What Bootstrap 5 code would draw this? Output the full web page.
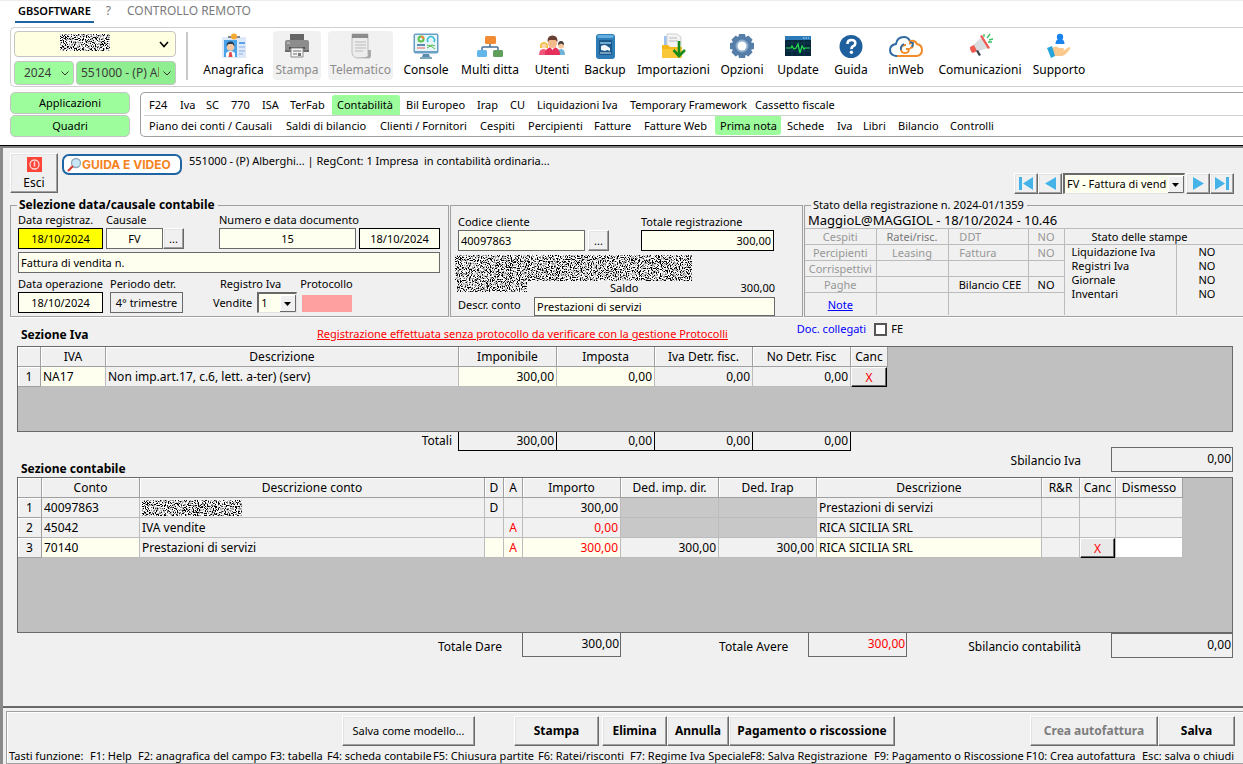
<!DOCTYPE html>
<html lang="it">
<head>
<meta charset="utf-8">
<meta name="viewport" content="width=device-width, initial-scale=1">
<title>GBsoftware - Prima nota</title>
<link href="https://cdn.jsdelivr.net/npm/bootstrap@5.3.0/dist/css/bootstrap.min.css" rel="stylesheet">
<style>
  :root { --face:#f0f0f0; --cream:#fffff0; --edge:#696969; --soft:#a0a0a0; --green:#9dfd9d; }
  body { font-family:"Noto Sans","Open Sans",sans-serif; font-size:11px; line-height:14px; color:#000; background:#fff; border-top:1px solid #ececec; overflow-x:hidden; }
  button, input, select { font-family:inherit; color:inherit; }

  /* top tabs */
  .top-tabs { height:26px; padding-left:15px; font-size:12px; }
  .top-tabs a { color:#7b7b7b; text-decoration:none; line-height:20px; height:22px; }
  .top-tabs a.current { color:#000; font-size:11px; font-weight:600; border-bottom:2px solid #1f64a3; padding:0 3px; }

  /* ribbon */
  .ribbon { margin-left:10px; height:60px; border:1px solid #cfcfcf; border-right:0; border-radius:5px 0 0 5px; padding:3px 0 0 3px; }
  .pickers { display:grid; grid-template-columns:60px 100px; gap:3px 2px; }
  .picker { appearance:none; min-width:0; border:1px solid #c4c4c4; border-radius:4px; height:24px; padding:0 20px 0 9px; font-size:12px; color:#3c3c3c; outline:0;
    background:var(--green) url("data:image/svg+xml,%3Csvg xmlns='http://www.w3.org/2000/svg' width='8' height='5'%3E%3Cpath d='M.5.5 4 4 7.5.5' fill='none' stroke='%23333'/%3E%3C/svg%3E") no-repeat right 4px center; }
  .picker.firm { padding:0 16px 0 4px; background-color:#8fee8f; }
  .picker.who { width:100%; height:26px; background-color:#ffffe1; background-image:url("data:image/svg+xml,%3Csvg xmlns='http://www.w3.org/2000/svg' width='10' height='7'%3E%3Cpath d='M1 1 5 5.500 9 1' fill='none' stroke='%23000' stroke-width='1.600'/%3E%3C/svg%3E"); background-position:right 6px center; }
  .who-wrap { grid-column:1 / 3; position:relative; }
  .who-wrap svg { position:absolute; left:46px; top:3px; }
  .divider { width:2px; height:48px; background:#c9c9c9; margin:1px 0 0 10px; }
  .tools { display:grid; grid-template-columns:67px 60px 67px 64px 64px 60px 46px 91px 46px 66px 40px 70px 78px 80px; margin-left:12px; }
  .tool { border:0; background:none; padding:2px 0 0; height:49px; font-size:12px; line-height:16px; white-space:nowrap; display:flex; flex-direction:column; align-items:center; gap:3px; border-radius:4px; }
  .tool:disabled { background:#f1f1f1; color:#8c8c8c; justify-self:center; width:48px; }
  .tool.wide:disabled { width:65px; }
  .tool svg { height:26px; flex:none; }

  /* menus */
  .menu-bar { margin:5px 0 8px 10px; }
  .side { width:120px; margin-right:10px; display:flex; flex-direction:column; gap:1px; }
  .side button { height:22px; border:1px solid #c4c4c4; border-radius:5px; background:var(--green); padding:0; font-size:11px; }
  .menus { border:1px solid var(--soft); border-right:0; border-radius:5px 0 0 5px; height:45px; padding:2px 0 0 3px; }
  .menu-line { display:grid; height:20px; line-height:19px; }
  .menu-line + .menu-line { border-top:1px solid #cfcfcf; height:21px; }
  .menu-line a { color:#000; text-decoration:none; white-space:nowrap; padding-left:5px; }
  .menu-line a.on { background:var(--green); border-radius:3px 3px 0 0; }
  .menu-line a.on ~ a { padding-left:6px; }
  .menu-line + .menu-line a.on { border-radius:0 0 3px 3px; height:19px; }
  .menu-a { grid-template-columns:31px 26px 25px 31px 28px 47px 68px 71px 33px 27px 93px 125px 1fr; }
  .menu-b { grid-template-columns:137px 94px 100px 48px 66px 50px 76px 66px 50px 26px 35px 52px 1fr; }

  /* work area */
  .work { border-top:1px solid #000; background:var(--face); box-shadow:inset 0 2px 0 #808080, inset 3px 0 0 #8a8a8a; padding:3px 0 0 3px; }
  .sheet { padding:4px 0 0 7px; border-bottom:2px solid var(--edge); }
  .bevel { background:var(--face); border:1px solid; border-color:#fff var(--edge) var(--edge) #fff; box-shadow:inset -1px -1px 0 var(--soft), inset 1px 1px 0 #e3e3e3; padding:0; border-radius:0; }
  .exit { width:48px; height:40px; font-size:12px; line-height:14px; display:flex; flex-direction:column; align-items:center; gap:4px; padding-top:3px; }
  .guide { border:2px solid #1f64a3; border-radius:7px; background:#fff; width:120px; height:21px; margin:1px 0 0 4px; color:#f58220; font:700 12px/17px Inter,"Noto Sans",sans-serif; text-decoration:none; white-space:nowrap; display:flex; align-items:center; padding-left:2px; }
  .guide:hover { color:#f58220; }
  .firm-line { line-height:16px; margin-left:7px; }
  .navigator { margin-right:9px; }
  .navigator button { width:24px; height:21px; display:flex; align-items:center; justify-content:center; }
  .old-select { appearance:none; border:1px solid #e3e3e3; border-top:2px solid var(--edge); border-left:2px solid var(--edge); border-radius:0; height:21px; padding:0 17px 0 2px; font-size:11px; outline:0;
    background:var(--cream) url("data:image/svg+xml,%3Csvg xmlns='http://www.w3.org/2000/svg' width='16' height='17'%3E%3Cpath fill='%23f0f0f0' d='M0 0h16v17H0z'/%3E%3Cpath d='M.5 17V.500H16' fill='none' stroke='%23fff'/%3E%3Cpath d='M0 16.500h15.500V0' fill='none' stroke='%23696969'/%3E%3Cpath d='M4 7h7L7.500 11z'/%3E%3C/svg%3E") no-repeat right 0 center; }
  .navigator .old-select { width:122px; margin:0 1px; }
  .old-select.one { width:40px; }

  /* entry groups */
  .groups { display:grid; grid-template-columns:439fr 353fr 439fr; gap:1px; margin-top:4px; }
  .groups fieldset { border:1px solid var(--soft); box-shadow:0 1px 0 #fff; min-width:0; }
  .groups fieldset.entry { padding:0 8px 2px 7px; }
  .groups fieldset.client { margin-top:7px; padding:8px 27px 0 7px; }
  .groups legend { float:none; width:auto; margin:0 0 0 6px; padding:0 3px 0 2px; font-size:11px; line-height:14px; color:#000; }
  .groups legend.strong { font-size:12px; font-weight:700; margin-left:-1px; }
  .groups label, .cap { display:block; line-height:16px; white-space:nowrap; }
  .gap3 { margin-left:3px; } .gap7 { margin-left:7px; } .gap30 { margin-left:30px; }
  .below { margin-top:3px; }
  .box { display:block; width:100%; height:21px; border:1px solid var(--edge); border-radius:0; background:var(--cream); padding:0 2px; font-size:11px; outline:0; }
  .box.dark { border-color:#000; }
  .box.hot { background:#ff0; }
  .box.flat { background:var(--face); }
  .box.low { height:19px; }
  .w21 { width:21px; height:21px; font-size:11px; line-height:12px; }
  .w57 { width:57px; } .w73 { width:73px; } .w81 { width:81px; } .w85 { width:85px; }
  .w127 { width:127px; } .w133 { width:133px; } .w137 { width:137px; } .w241 { width:241px; }
  .regline { display:flex; align-items:center; gap:5px; }
  .proto { width:50px; height:17px; background:#ffa0a0; margin:3px 0 0 2px; }
  .total { margin-left:32px; }
  .blurred { position:relative; margin:4px 0 5px -3px; }
  .saldo { position:absolute; left:155px; right:0; bottom:-3px; }
  .who-when { font-size:13px; line-height:16px; padding-left:3px; }
  .cells { table-layout:fixed; width:259px; }
  .cells td { border:1px solid #bcbcbc; border-left:0; padding:0; height:16px; line-height:15px; text-align:center; color:#979797; white-space:nowrap; }
  .cells .mid { color:#777; }
  .cells .lit { color:#000; }
  .cells a { color:#00f; }
  .cells tr.last td { height:22px; border-bottom:0; }
  .c71 { width:71px; } .c72 { width:72px; } .c80 { width:80px; } .c36 { width:36px; }
  .prints { border-top:1px solid #bcbcbc; }
  .prints .heading { border-bottom:1px solid #bcbcbc; height:16px; line-height:15px; padding-left:27px; }
  .prints dl { display:grid; grid-template-columns:112px 1fr; }
  .prints dt, .prints dd { margin:0; line-height:14px; height:14px; font-weight:400; }
  .prints dt { padding-left:7px; border-right:1px solid #bcbcbc; }
  .prints dd { padding-left:22px; }
  .prints dt:last-of-type { height:28px; }

  /* grids */
  .notice { height:29px; line-height:16px; padding:0 0 0 11px; }
  .notice .head { margin-top:10px; width:296px; }
  .notice .warn { margin-top:9px; color:#f00; text-decoration:underline; }
  .docs { margin:4px 0 0 auto; padding-right:340px; }
  .docs label { color:#00f; }
  .docs input { appearance:none; width:13px; height:13px; border:2px solid #555; background:#fff; margin:2px 4px 0 8px; }
  .head { font-size:12px; font-weight:700; line-height:16px; margin:0; }
  .well { background:#c0c0c0; border:1px solid var(--edge); margin:0 10px 0 7px; }
  .well.iva { height:86px; }
  .well.conta { height:156px; }
  .sheet-grid { table-layout:fixed; width:1px; border-collapse:separate; border-spacing:0; font-size:12px; }
  .sheet-grid th { background:var(--face); font-weight:400; text-align:center; border-right:1px solid var(--soft); border-bottom:1px solid var(--soft); box-shadow:inset 1px 1px 0 #fff; height:20px; line-height:19px; padding:0; white-space:nowrap; }
  .sheet-grid td { background:#f1f1f1; border-right:1px solid #bcbcbc; border-bottom:1px solid #bcbcbc; height:20px; line-height:19px; padding:0 2px; white-space:nowrap; }
  .sheet-grid td.cream { background:var(--cream); }
  .sheet-grid td.off { background:#c8c8c8; }
  .sheet-grid td.press { padding:0; }
  .k19{width:19px} .k23{width:23px} .k24{width:24px} .k36{width:36px} .k37{width:37px} .k38{width:38px} .k65{width:65px} .k67{width:67px} .k98{width:98px} .k225{width:225px} .k345{width:345px} .k353{width:353px}
  .kill { display:block; width:100%; height:20px; margin-bottom:-1px; background:#e9e9e9; border:1px solid; border-color:#fff #000 #000 #fff; box-shadow:inset -1px -1px 0 var(--edge); color:#f00; font-size:12px; line-height:14px; padding:2px 0 0; }
  .red { color:#f00; }
  .between { height:45px; margin:0 10px 0 7px; }
  .between .head { padding-left:4px; }
  .sums { display:grid; grid-template-columns:442px repeat(4,98px); font-size:12px; line-height:18px; text-align:right; }
  .sums output { border:solid #000; border-width:0 1px 1px 0; padding-right:2px; }
  .sums .lead-in { border-right:1px solid #000; padding-right:6px; height:19px; }
  .sbil { font-size:12px; line-height:28px; margin-top:15px; }
  .balance { border:1px solid var(--edge); height:25px; line-height:22px; text-align:right; padding-right:1px; font-size:12px; width:122px; }
  .balance.narrow { width:99px; border-top:0; height:24px; }
  .end-row { font-size:12px; line-height:28px; margin-right:10px; }
  .pad20 { padding-right:20px; } .pad30 { padding-right:30px; }
  .gap-avere { margin-left:98px; } .gap-sbil { margin-left:61px; }

  /* footer */
  .actions { margin:3px 0 0 3px; border:1px solid var(--soft); border-right:0; box-shadow:inset 1px 1px 0 #fff; padding:4px 8px 0 2px; }
  .actions .bevel { height:30px; font-size:12px; font-weight:700; white-space:nowrap; }
  .actions .bevel:disabled { color:#7d7d7d; }
  .actions .bevel.model { width:133px; font-size:11px; font-weight:400; }
  .b62{width:62px} .b65{width:65px} .b77{width:77px} .b85{width:85px} .b128{width:128px} .b166{width:166px}
  .stampa { margin-left:39px; } .elim { margin-left:3px; } .crea { margin-left:135px; }
  .keys { display:grid; grid-template-columns:81px 48px 132px 57px 106px 105px 92px 120px 124px 152px 116px 1fr; white-space:nowrap; line-height:15px; margin-top:2px; }
</style>
</head>
<body class="d-flex flex-column min-vh-100">

<svg width="0" height="0" class="position-absolute" aria-hidden="true">
  <filter id="speckle" x="0" y="0" width="100%" height="100%">
    <feTurbulence type="fractalNoise" baseFrequency="0.9" numOctaves="2" seed="4"/>
    <feColorMatrix values="1 0 0 0 0  1 0 0 0 0  1 0 0 0 0  0 0 0 0 1"/>
    <feComponentTransfer><feFuncR type="linear" slope="6" intercept="-2.4"/><feFuncG type="linear" slope="6" intercept="-2.4"/><feFuncB type="linear" slope="6" intercept="-2.4"/></feComponentTransfer>
  </filter>
</svg>

<nav class="top-tabs d-flex align-items-start">
  <a href="#" class="current">GBSOFTWARE</a>
  <a href="#" class="ms-2 ps-1">?</a>
  <a href="#" class="ms-3">CONTROLLO REMOTO</a>
</nav>

<header>
  <div class="ribbon d-flex">
    <div class="pickers">
      <div class="who-wrap">
        <select class="picker who" aria-label="Utente"><option></option></select>
        <svg width="50" height="17"><rect width="50" height="17" filter="url(#speckle)"/></svg>
      </div>
      <select class="picker" aria-label="Anno"><option>2024</option></select>
      <select class="picker firm" aria-label="Ditta"><option>551000 - (P) Alberghi</option></select>
    </div>
    <div class="divider"></div>
    <div class="tools">
      <button class="tool"><svg width="26" viewBox="0 0 26 26"><rect x="1" y="4" width="24" height="21" fill="#dde8f8"/><rect x="3" y="7" width="13" height="17" fill="#4aa3e8"/><path d="M5 24v-4q4.500-4 9 0v4z" fill="#fff"/><circle cx="9.500" cy="14" r="3.800" fill="#f7c9a4"/><path d="M5.500 13.500q0-5 4-5t4 5l-2-2.500h-4z" fill="#263b56"/><path d="M8.500 19h2l1 5h-4z" fill="#e14b4b"/><path d="M18 14h6M18 18h6M18 21h4" stroke="#a6c4ec" stroke-width="1.500"/><path d="M18 10h6" stroke="#2f8be0" stroke-width="1.500"/><path d="M7 4h12" stroke="#666" stroke-width="1.500"/><circle cx="13" cy="3.500" r="3" fill="#f7a830"/></svg>Anagrafica</button>
      <button class="tool" disabled><svg width="26" viewBox="0 0 26 26"><path d="M6 1h14v6H6z" fill="#666"/><path d="M1 9q0-2 2-2h20q2 0 2 2v9H1z" fill="#8d8d8d"/><path d="M1 17h24v2H1z" fill="#6b6b6b"/><path d="M5 14h16v2H5z" fill="#4c4c4c"/><path d="M7 15h12v9H7z" fill="#f4f4f4" stroke="#8a8a8a"/><path d="M9 18h8M9 21h4" stroke="#999" stroke-width="1.500"/><path d="M14 20h3v3h-3z" fill="#777"/><path d="M3 10h3" stroke="#ddd"/></svg>Stampa</button>
      <button class="tool wide" disabled><svg width="26" viewBox="0 0 26 26"><path d="M4 1h16v21q0 2 2 3H10q-5 0-6-5z" fill="#ececec" stroke="#bdbdbd"/><path d="M4 1h16v4H4z" fill="#8c8c8c"/><path d="M7 9h11M7 12h11M7 15h11M7 18h8" stroke="#bbb"/><path d="M20 17h3v6q0 2-2 2H8q4 0 10-1l2-1z" fill="#a9a9a9"/></svg>Telematico</button>
      <button class="tool"><svg width="26" viewBox="0 0 26 26"><rect x=".500" y=".500" width="25" height="20" rx="2" fill="#6aa0c4"/><rect x="2" y="2" width="22" height="16" fill="#e6f4fb"/><circle cx="8" cy="6" r="2.500" fill="none" stroke="#5cc24a" stroke-width="2"/><path d="M8 3.500a2.500 2.500 0 0 1 2.500 2.500" stroke="#f08b32" fill="none" stroke-width="2"/><path d="M15 9a3.500 3.500 0 1 1 6 0" fill="none" stroke="#35bfd4" stroke-width="1.500"/><path d="M4 12h8" stroke="#35699b" stroke-width="1.500"/><path d="M4 15h8" stroke="#e86450"/><path d="m14 12 4 1 4 3M14 15l5-3 3 1" fill="none" stroke="#58b84b"/><path d="M10 21h6l1 3H9z" fill="#5c8cab"/><path d="M7 24h12v2H7z" fill="#7fa8bf"/></svg>Console</button>
      <button class="tool"><svg width="26" viewBox="0 0 26 26"><path d="M13 9v5M5 18v-3q0-1 1-1h14q1 0 1 1v3" fill="none" stroke="#44719c" stroke-width="1.500"/><rect x="8" y="3" width="11" height="8" rx="1.500" fill="#f28c34"/><rect x="0" y="17" width="10" height="7" rx="1.500" fill="#62b7e8"/><rect x="16" y="17" width="10" height="7" rx="1.500" fill="#5f9f5a"/></svg>Multi ditta</button>
      <button class="tool"><svg width="26" viewBox="0 0 26 26"><path d="M0 22q0-6 4.500-6T9 22z" fill="#f0567a"/><path d="M1 15q-.500-6 4-6t4 6z" fill="#f2bd2e"/><circle cx="5" cy="13" r="2.500" fill="#fbd7b0"/><path d="M18 22q0-6 4-6t4 6z" fill="#6fb3d8"/><circle cx="22" cy="12.500" r="3" fill="#f4c79c"/><path d="M19 12q0-4 3-4t3 4l-3-1.500z" fill="#443b3b"/><path d="M6 22q0-8 7.500-8T21 22z" fill="#e6305c"/><path d="m11 14 2.500 3 2.500-3z" fill="#fff"/><path d="M9 8q0-5 4.500-5T18 8v3q-1 4-4.500 4T9 11z" fill="#f2b98b"/><path d="M8.500 9Q8 2.500 13.500 2.500T18.500 9l-2-2h-6z" fill="#6b3f33"/></svg>Utenti</button>
      <button class="tool"><svg width="26" viewBox="0 0 26 26"><rect x="4" y="1" width="19" height="25" rx="3" fill="#2d7cb5"/><rect x="5.500" y="2" width="16" height="3" rx="1" fill="#63aede"/><rect x="7" y="7" width="13" height="15" rx="1" fill="#1c5789"/><path d="M9 13q4-2 6 0l3 2v3l-3-1-2 1-4-1z" fill="#f2f7fb"/><path d="M8 10h11" stroke="#8fc7ea" stroke-width="1.500"/><path d="M8 20h11" stroke="#cfe5f3"/></svg>Backup</button>
      <button class="tool"><svg width="26" viewBox="0 0 26 26"><path d="M3 3h4v10H3z" fill="#9cc3ef"/><path d="M6 1h10l4 3v11H6z" fill="#f3f3f3" stroke="#cfcfcf"/><path d="M8 5h8M8 8h9" stroke="#bbb"/><path d="M1 12h6l2 2h12v11H1z" fill="#f6b91c"/><path d="M1 16h20v9H1z" fill="#f9c838"/><path d="M18 8v14M12.500 17l5.500 6 6-6" fill="none" stroke="#178a1b" stroke-width="2.600"/></svg>Importazioni</button>
      <button class="tool"><svg width="26" viewBox="0 0 26 26"><g fill="#557ea8"><circle cx="13" cy="13" r="10"/><path d="M10 1h6l1 5H9zM10 25h6l1-5H9zM1 10v6l5 1V9zM25 10v6l-5 1V9z"/><path transform="rotate(45 13 13)" d="M10 1h6l1 5H9zM10 25h6l1-5H9zM1 10v6l5 1V9zM25 10v6l-5 1V9z"/></g><circle cx="13" cy="13" r="6.500" fill="#8eaccc"/><circle cx="13" cy="13" r="4.500" fill="#fff"/></svg>Opzioni</button>
      <button class="tool"><svg width="26" viewBox="0 0 26 26"><path d="M0 3h26v20H0z" fill="#06263c"/><path d="M0 3h26v4H0z" fill="#2c7ab8"/><path d="M18 5h6" stroke="#bfe0f5" stroke-dasharray="1.500 1"/><path d="M1 10h24M1 18h24M7 7v16M13 7v16M19 7v16" stroke="#124a5d" stroke-width=".600"/><path d="M1 15h5l1-2 2 3 2-1 2-4 2 9 2-7 2 3 1-1h5" fill="none" stroke="#27e24d" stroke-width="1.200"/></svg>Update</button>
      <button class="tool"><svg width="26" viewBox="0 0 26 26"><circle cx="13" cy="13.500" r="11.500" fill="#205f9e"/><path d="M9.500 11q0-4 4-4t3.800 3.500q0 1.700-2 2.700t-1.800 3" fill="none" stroke="#fff" stroke-width="2.600"/><circle cx="13.400" cy="19.200" r="1.700" fill="#fff"/></svg>Guida</button>
      <button class="tool"><svg width="34" viewBox="0 0 34 26"><path d="M10 23H7Q1 22 1 17t6-6q1-7 8-7 4 0 6 4" fill="none" stroke="#2f6ba3" stroke-width="2"/><path d="M8 23h20q5-1 5-6t-5-6q-2-4-6-3l-2 1" fill="none" stroke="#f18a27" stroke-width="2"/><path d="M17 12q-5 0-5 4t4 4 4-4h-3M20 11q4-2 4 1t-3 3" fill="none" stroke="#f18a27" stroke-width="1.800"/><path d="M15 11q-4 2-3 6M21 9l3 1-1 4" fill="none" stroke="#2f6ba3" stroke-width="1.800"/></svg>inWeb</button>
      <button class="tool"><svg width="26" viewBox="0 0 26 26"><path d="M5 13 15 4l6 11-13 4z" fill="#d9dde0"/><path d="m13 3 2-1 8 13-2 1z" fill="#ef5a4e"/><path d="m3 14 4-2 3 6-4 2q-3-1-3-6z" fill="#ef5a4e"/><path d="m9 18 2-1 3 5-2 1z" fill="#39424d"/><path d="m17 4 0-3M20 5l3-4M21 9h4M22 7l4-1" stroke="#36c066" stroke-width="1.300"/></svg>Comunicazioni</button>
      <button class="tool"><svg width="26" viewBox="0 0 26 26"><circle cx="14" cy="4" r="3.200" fill="#1a84ee"/><path d="M9.500 11q0-5 4.500-5t4.500 5z" fill="#1a84ee"/><path d="M6 15q4-3 7 0h4q2 1 0 3l6-4q2 0 1 2-4 6-8 7H8z" fill="#fbc98d"/><path d="m1 15 5-2 3 10-4 2z" fill="#27a5dc"/></svg>Supporto</button>
    </div>
  </div>

  <div class="menu-bar d-flex">
    <div class="side">
      <button>Applicazioni</button>
      <button>Quadri</button>
    </div>
    <div class="menus flex-grow-1">
      <nav class="menu-line menu-a">
        <a href="#">F24</a><a href="#">Iva</a><a href="#">SC</a><a href="#">770</a><a href="#">ISA</a><a href="#">TerFab</a><a href="#" class="on">Contabilità</a><a href="#">Bil Europeo</a><a href="#">Irap</a><a href="#">CU</a><a href="#">Liquidazioni Iva</a><a href="#">Temporary Framework</a><a href="#">Cassetto fiscale</a>
      </nav>
      <nav class="menu-line menu-b">
        <a href="#">Piano dei conti / Causali</a><a href="#">Saldi di bilancio</a><a href="#">Clienti / Fornitori</a><a href="#">Cespiti</a><a href="#">Percipienti</a><a href="#">Fatture</a><a href="#">Fatture Web</a><a href="#" class="on">Prima nota</a><a href="#">Schede</a><a href="#">Iva</a><a href="#">Libri</a><a href="#">Bilancio</a><a href="#">Controlli</a>
      </nav>
    </div>
  </div>
</header>

<main class="work flex-grow-1 d-flex flex-column">
  <div class="sheet flex-grow-1">
    <div class="d-flex align-items-start">
      <button class="bevel exit"><svg width="15" height="15" viewBox="0 0 15 15"><rect width="15" height="15" fill="#ff4438"/><circle cx="7.500" cy="7.500" r="4.500" fill="none" stroke="#ffd9d6" stroke-width="1.300"/><path d="M7.500 4.500v5" stroke="#ffd9d6" stroke-width="1.500"/></svg>Esci</button>
      <a href="#" class="guide"><svg width="16" height="16" viewBox="0 0 16 16"><circle cx="10" cy="6" r="4.500" fill="#c9e6f7" stroke="#8fa9bd" stroke-width="1.300"/><path d="m7 9-5 5" stroke="#d83c31" stroke-width="2.200"/></svg>GUIDA E VIDEO</a>
      <span class="firm-line">551000 - (P) Alberghi... | RegCont: 1 Impresa&nbsp; in contabilità ordinaria...</span>
      <div class="navigator d-flex ms-auto mt-3 pt-1">
        <button class="bevel" aria-label="Prima"><svg width="16" height="13"><path d="M1 0h3v13H1zM15 0v13L5 6.500z" fill="#45b3e8"/></svg></button>
        <button class="bevel" aria-label="Precedente"><svg width="13" height="13"><path d="M12 0v13L1 6.500z" fill="#45b3e8"/></svg></button>
        <select class="old-select" aria-label="Registrazione"><option>FV - Fattura di vendita</option></select>
        <button class="bevel" aria-label="Successiva"><svg width="13" height="13"><path d="M1 0v13l11-6.500z" fill="#45b3e8"/></svg></button>
        <button class="bevel" aria-label="Ultima"><svg width="16" height="13"><path d="M12 0h3v13h-3zM1 0v13l10-6.500z" fill="#45b3e8"/></svg></button>
      </div>
    </div>

    <form class="groups" onsubmit="return false">
      <fieldset class="entry">
        <legend class="strong">Selezione data/causale contabile</legend>
        <div class="d-flex align-items-end">
          <div class="w85"><label for="reg">Data registraz.</label><input id="reg" class="box dark hot text-center" value="18/10/2024"></div>
          <div class="w57 gap3"><label for="cau">Causale</label><input id="cau" class="box text-center" value="FV"></div>
          <button class="bevel w21" aria-label="Cerca causale">...</button>
          <div class="w137 ms-auto"><label for="num">Numero e data documento</label><input id="num" class="box text-center" value="15"></div>
          <input class="box dark w81 text-center gap3" aria-label="Data documento" value="18/10/2024">
        </div>
        <input class="box below" aria-label="Descrizione" value="Fattura di vendita n.">
        <div class="d-flex below">
          <div class="w85"><label for="ope">Data operazione</label><input id="ope" class="box dark text-center" value="18/10/2024"></div>
          <div class="w73 gap7"><label for="per">Periodo detr.</label><input id="per" class="box flat text-center" value="4° trimestre"></div>
          <div class="gap30"><label for="riv" class="gap7">Registro Iva</label><div class="regline">Vendite <select id="riv" class="old-select one"><option>1</option></select></div></div>
          <div class="gap3"><span class="cap">Protocollo</span><output class="proto d-block"></output></div>
        </div>
      </fieldset>

      <fieldset class="client">
        <div class="d-flex align-items-end">
          <div class="w127"><label for="cli">Codice cliente</label><input id="cli" class="box" value="40097863"></div>
          <button class="bevel w21 gap3" aria-label="Cerca cliente">...</button>
          <div class="w133 total"><label for="tot">Totale registrazione</label><input id="tot" class="box dark text-end" value="300,00"></div>
        </div>
        <div class="blurred">
          <svg class="d-block" width="238" height="37"><path d="M0 0H237V26H72V37H2V26H0z" filter="url(#speckle)" clip-path="path('M0 0H237V26H72V37H2V26H0z')"/></svg>
          <div class="saldo d-flex"><span>Saldo</span><span class="ms-auto">300,00</span></div>
        </div>
        <div class="d-flex"><label for="dco" class="flex-grow-1">Descr. conto</label><input id="dco" class="box low w241" value="Prestazioni di servizi"></div>
      </fieldset>

      <fieldset class="border-end-0">
        <legend>Stato della registrazione n. 2024-01/1359</legend>
        <div class="who-when">MaggioL@MAGGIOL - 18/10/2024 - 10.46</div>
        <div class="d-flex">
          <table class="cells">
            <colgroup><col class="c71"><col class="c72"><col class="c80"><col class="c36"></colgroup>
            <tr><td>Cespiti</td><td class="mid">Ratei/risc.</td><td class="text-start ps-2">&nbsp;DDT</td><td>NO</td></tr>
            <tr><td>Percipienti</td><td>Leasing</td><td class="text-start ps-2">&nbsp;Fattura</td><td>NO</td></tr>
            <tr><td>Corrispettivi</td><td></td><td></td><td></td></tr>
            <tr><td>Paghe</td><td></td><td class="lit ps-1">Bilancio CEE</td><td class="lit">NO</td></tr>
            <tr class="last"><td><a href="#">Note</a></td><td></td><td colspan="2"></td></tr>
          </table>
          <div class="prints flex-grow-1">
            <div class="heading">Stato delle stampe</div>
            <dl class="mb-0"><dt>Liquidazione Iva</dt><dd>NO</dd><dt>Registri Iva</dt><dd>NO</dd><dt>Giornale</dt><dd>NO</dd><dt>Inventari</dt><dd>NO</dd></dl>
          </div>
        </div>
      </fieldset>
    </form>

    <div class="notice d-flex">
      <h2 class="head">Sezione Iva</h2>
      <a href="#" class="warn">Registrazione effettuata senza protocollo da verificare con la gestione Protocolli</a>
      <div class="docs d-flex"><label for="fe">Doc. collegati</label><input type="checkbox" id="fe"><span>FE</span></div>
    </div>

    <div class="well iva">
      <table class="sheet-grid">
        <colgroup><col class="k23"><col class="k65"><col class="k353"><col class="k98"><col class="k98"><col class="k98"><col class="k98"><col class="k37"></colgroup>
        <thead><tr><th></th><th>IVA</th><th>Descrizione</th><th>Imponibile</th><th>Imposta</th><th>Iva Detr. fisc.</th><th>No Detr. Fisc</th><th>Canc</th></tr></thead>
        <tbody><tr><th>1</th><td class="cream">NA17</td><td>Non imp.art.17, c.6, lett. a-ter) (serv)</td><td class="cream text-end">300,00</td><td class="cream text-end">0,00</td><td class="text-end">0,00</td><td class="text-end">0,00</td><td class="press"><button class="kill">X</button></td></tr></tbody>
      </table>
    </div>

    <div class="between d-flex justify-content-between">
      <div class="d-flex flex-column justify-content-between">
        <div class="sums"><span class="lead-in">Totali</span><output>300,00</output><output>0,00</output><output>0,00</output><output>0,00</output></div>
        <h2 class="head">Sezione contabile</h2>
      </div>
      <div class="d-flex sbil"><span class="pad30">Sbilancio Iva</span><output class="balance">0,00</output></div>
    </div>

    <div class="well conta">
      <table class="sheet-grid">
        <colgroup><col class="k24"><col class="k98"><col class="k345"><col class="k19"><col class="k19"><col class="k98"><col class="k98"><col class="k98"><col class="k225"><col class="k38"><col class="k36"><col class="k67"></colgroup>
        <thead><tr><th></th><th>Conto</th><th>Descrizione conto</th><th>D</th><th>A</th><th>Importo</th><th>Ded. imp. dir.</th><th>Ded. Irap</th><th>Descrizione</th><th>R&amp;R</th><th>Canc</th><th>Dismesso</th></tr></thead>
        <tbody>
          <tr><th>1</th><td>40097863</td><td><svg class="d-block" width="100" height="16"><rect width="100" height="16" filter="url(#speckle)"/></svg></td><td class="text-center">D</td><td></td><td class="text-end">300,00</td><td class="off"></td><td class="off"></td><td>Prestazioni di servizi</td><td></td><td></td><td></td></tr>
          <tr><th>2</th><td>45042</td><td>IVA vendite</td><td></td><td class="text-center red">A</td><td class="text-end red">0,00</td><td class="off"></td><td class="off"></td><td>RICA SICILIA SRL</td><td></td><td></td><td></td></tr>
          <tr><th>3</th><td class="cream">70140</td><td>Prestazioni di servizi</td><td class="cream"></td><td class="text-center red cream">A</td><td class="text-end red cream">300,00</td><td class="text-end">300,00</td><td class="text-end">300,00</td><td class="cream">RICA SICILIA SRL</td><td></td><td class="press"><button class="kill">X</button></td><td class="bg-white"></td></tr>
        </tbody>
      </table>
    </div>

    <div class="end-row d-flex justify-content-end">
      <span class="pad20">Totale Dare</span><output class="balance narrow">300,00</output>
      <span class="pad20 gap-avere">Totale Avere</span><output class="balance narrow red">300,00</output>
      <span class="pad30 gap-sbil">Sbilancio contabilità</span><output class="balance">0,00</output>
    </div>
  </div>

  <footer class="actions">
    <div class="d-flex justify-content-end">
      <button class="bevel model">Salva come modello...</button>
      <button class="bevel b85 stampa">Stampa</button>
      <button class="bevel b65 elim">Elimina</button>
      <button class="bevel b62">Annulla</button>
      <button class="bevel b166">Pagamento o riscossione</button>
      <button class="bevel b128 crea" disabled>Crea autofattura</button>
      <button class="bevel b77">Salva</button>
    </div>
    <div class="keys"><span>Tasti funzione:</span><span>F1: Help</span><span>F2: anagrafica del campo</span><span>F3: tabella</span><span>F4: scheda contabile</span><span>F5: Chiusura partite</span><span>F6: Ratei/risconti</span><span>F7: Regime Iva Speciale</span><span>F8: Salva Registrazione</span><span>F9: Pagamento o Riscossione</span><span>F10: Crea autofattura</span><span>Esc: salva o chiudi</span></div>
  </footer>
</main>

<script src="https://cdn.jsdelivr.net/npm/bootstrap@5.3.0/dist/js/bootstrap.bundle.min.js"></script>
</body>
</html>
